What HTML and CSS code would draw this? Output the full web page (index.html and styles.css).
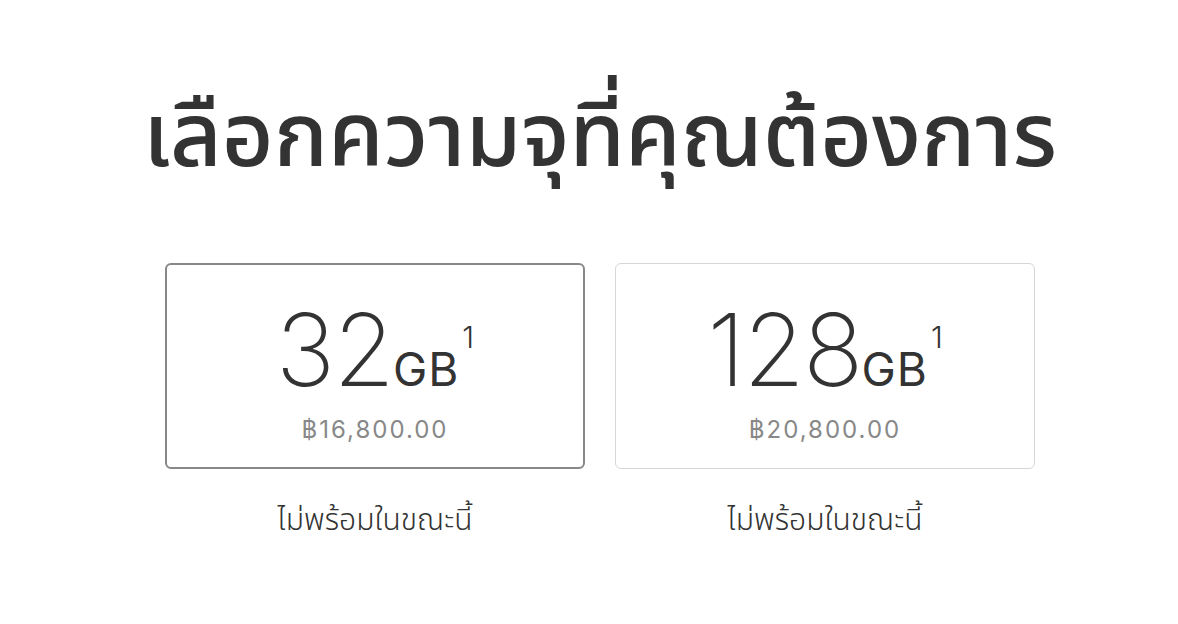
FILE: index.html
```html
<!DOCTYPE html>
<html lang="th">
<head>
  <meta charset="UTF-8">
  <meta name="viewport" content="width=device-width, initial-scale=1.0">
  <title>เลือกความจุ</title>
  <link rel="stylesheet" href="styles.css">
</head>
<body>
  <div class="page">
    <h1 class="title">เลือกความจุที่คุณต้องการ</h1>
    <div class="options">
      <div class="option">
        <div class="box selected">
          <div class="size"><span class="num">32</span><span class="unit">GB</span><sup class="note">1</sup></div>
          <div class="price">฿16,800.00</div>
        </div>
        <p class="status">ไม่พร้อมในขณะนี้</p>
      </div>
      <div class="option">
        <div class="box">
          <div class="size"><span class="num">128</span><span class="unit">GB</span><sup class="note">1</sup></div>
          <div class="price">฿20,800.00</div>
        </div>
        <p class="status">ไม่พร้อมในขณะนี้</p>
      </div>
    </div>
  </div>
</body>
</html>
```

FILE: styles.css
```css
body {
  margin: 0;
  background: #fff;
  color: #333;
  font-family: 'Noto Sans Thai', 'Noto Sans Thai UI', 'Noto Sans', 'DejaVu Sans', sans-serif;
}
.page {
  width: 1178px;
  height: 624px;
  padding: 85px 0 0 22px;
  box-sizing: border-box;
}
.title {
  margin: 0;
  text-align: center;
  font-size: 89.5px;
  font-weight: 500;
  line-height: 108px;
  color: #333;
}
.options {
  display: flex;
  justify-content: center;
  gap: 30px;
  margin-top: 70px;
}
.option {
  width: 420px;
  text-align: center;
}
.box {
  height: 206px;
  border: 1px solid #d6d6d6;
  border-radius: 6px;
  box-sizing: border-box;
  padding-top: 36px;
}
.box.selected {
  border: 2px solid #888;
  padding-top: 35px;
}
.size {
  font-family: 'Inter', 'Liberation Sans', sans-serif;
  line-height: 100px;
  height: 100px;
  color: #333;
}
.num {
  font-size: 100px;
  font-weight: 200;
  letter-spacing: -2px;
}
.unit {
  font-size: 46px;
  font-weight: 400;
  letter-spacing: 1px;
}
.note {
  font-size: 30px;
  font-weight: 300;
  vertical-align: 38px;
  line-height: 0;
  margin-left: 3px;
}
.price {
  margin-top: 15px;
  font-family: 'Inter', 'Liberation Sans', sans-serif;
  font-size: 24px;
  letter-spacing: 2px;
  color: #888;
}
.status {
  margin: 32px 0 0;
  font-size: 30px;
  font-weight: 300;
  line-height: 40px;
  color: #333;
}
```
